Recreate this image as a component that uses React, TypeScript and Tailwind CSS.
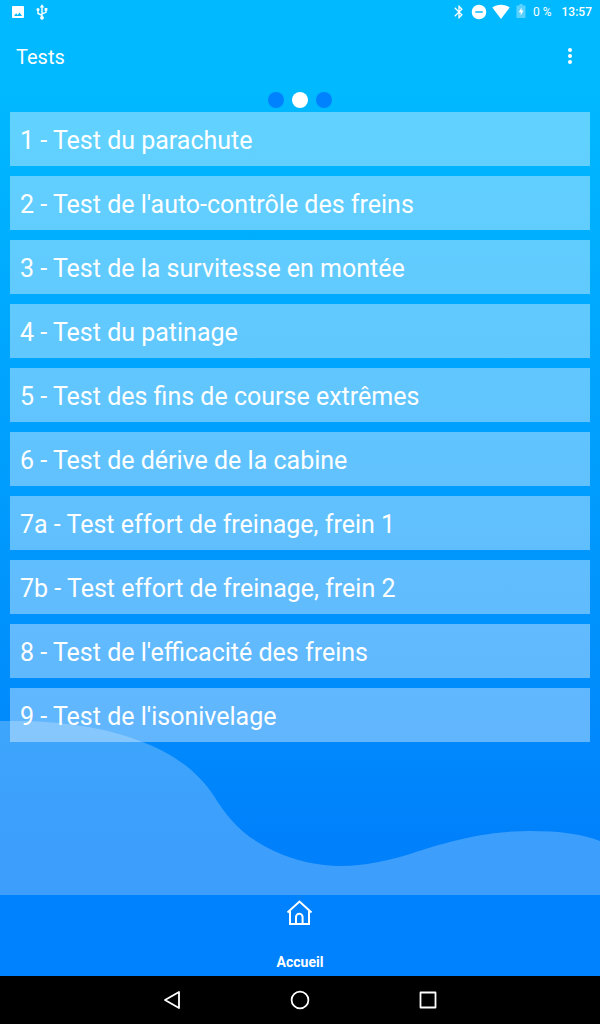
const tests = [
    { id: '1', label: 'Test du parachute' },
    { id: '2', label: "Test de l'auto-contrôle des freins" },
    { id: '3', label: 'Test de la survitesse en montée' },
    { id: '4', label: 'Test du patinage' },
    { id: '5', label: 'Test des fins de course extrêmes' },
    { id: '6', label: 'Test de dérive de la cabine' },
    { id: '7a', label: 'Test effort de freinage, frein 1' },
    { id: '7b', label: 'Test effort de freinage, frein 2' },
    { id: '8', label: "Test de l'efficacité des freins" },
    { id: '9', label: "Test de l'isonivelage" },
];

const pages = ['Page 1', 'Page 2', 'Page 3'];
const currentPage = 1;

function StatusBar() {
    return (
        <div className="flex h-6 items-center justify-between pl-3 pr-2 text-xs">
            <div className="flex items-center gap-2.5">
                <svg className="h-3 w-3" viewBox="0 0 12 12" fill="currentColor">
                    <path fillRule="evenodd" d="M1 0h10a1 1 0 0 1 1 1v10a1 1 0 0 1-1 1H1a1 1 0 0 1-1-1V1a1 1 0 0 1 1-1Zm1 10h8L7.6 6.4 5.6 9 4.1 7.2Z" />
                </svg>
                <svg className="h-4 w-4" viewBox="0 0 16 16" fill="none" stroke="currentColor" strokeWidth="1.4">
                    <path d="M8 13V3M8 11.3 4 9.5V6M8 9.8l4-1.5V5" />
                    <path d="M8 .3 10.3 3.6H5.7Z" fill="currentColor" stroke="none" />
                    <circle cx="4" cy="5.5" r="1.5" fill="currentColor" stroke="none" />
                    <path d="M10.6 4h2.8v2.8h-2.8Z" fill="currentColor" stroke="none" />
                    <circle cx="8" cy="13.8" r="1.9" fill="currentColor" stroke="none" />
                </svg>
            </div>
            <div className="flex items-center">
                <svg className="h-4 w-4" viewBox="0 0 24 24" fill="currentColor">
                    <path d="M17.71 7.71 12 2h-1v7.59L6.41 5 5 6.41 10.59 12 5 17.59 6.41 19 11 14.41V22h1l5.71-5.71-4.3-4.29 4.3-4.29ZM13 5.83l1.88 1.88L13 9.59V5.83Zm1.88 10.46L13 18.17v-3.76l1.88 1.88Z" />
                </svg>
                <svg className="ml-1 h-4 w-4" viewBox="0 0 16 16" fill="currentColor">
                    <path fillRule="evenodd" d="M8 .7a7.3 7.3 0 1 0 0 14.6A7.3 7.3 0 0 0 8 .7ZM4.3 7.2h7.4v1.6H4.3Z" />
                </svg>
                <svg className="ml-1 h-4 w-5" viewBox="0 0 20 16" fill="currentColor">
                    <path d="M10 15 1.3 3.6C3.8 1.8 6.8.8 10 .8s6.2 1 8.7 2.8Z" />
                </svg>
                <svg className="ml-1 h-4 w-3" viewBox="0 0 12 16" fill="currentColor">
                    <path opacity=".35" d="M4.5 0h3v1.5h3V14h-9V1.5h3Z" />
                    <path d="M6.6 3.5 3.7 8.3h2v3.2l2.9-5h-2Z" />
                </svg>
                <span className="ml-1.5">0 %</span>
                <span className="ml-2.5 font-medium">13:57</span>
            </div>
        </div>
    );
}

function Wave() {
    return (
        <svg
            className="absolute bottom-0 left-0 h-[174px] w-full"
            viewBox="0 0 600 174"
            preserveAspectRatio="none"
            fill="#ffffff"
            fillOpacity="0.24"
            aria-hidden="true"
        >
            <path d="M0 0C60-1 105 6 145 22C180 36 200 54 214 75C228 98 243 115 272 129C320 152 365 147 410 133C460 116 495 110 530 110C560 110 582 113 600 120V174H0Z" />
        </svg>
    );
}

export default function App() {
    return (
        <div className="flex min-h-screen flex-col bg-[#0082ff] font-[Roboto,sans-serif] text-white">
            <div className="relative flex flex-1 flex-col bg-linear-to-b from-[#00b9ff] from-10% to-[#0080fb] to-95%">
                <Wave />

                <div className="relative">
                    <StatusBar />

                    <header className="flex h-16 items-center justify-between pl-4 pr-5">
                        <h1 className="pt-0.5 text-xl">Tests</h1>
                        <button type="button" aria-label="Plus d'options" className="flex h-8 w-5 items-center justify-center">
                            <svg className="h-4 w-1" viewBox="0 0 4 16" fill="currentColor">
                                <circle cx="2" cy="2" r="2" />
                                <circle cx="2" cy="8" r="2" />
                                <circle cx="2" cy="14" r="2" />
                            </svg>
                        </button>
                    </header>

                    <nav aria-label="Pages" className="flex justify-center gap-2 py-1">
                        {pages.map((page, i) => (
                            <button
                                key={page}
                                type="button"
                                aria-label={page}
                                className={i === currentPage ? 'h-4 w-4 rounded-full bg-white' : 'h-4 w-4 rounded-full bg-[#0082ff]'}
                            />
                        ))}
                    </nav>

                    <ul className="flex flex-col gap-[10px] px-[10px]">
                        {tests.map(test => (
                            <li key={test.id}>
                                <button type="button" className="h-[54px] w-full bg-white/38 px-[10px] pt-1 text-left text-[25px] leading-[50px]">
                                    {test.id} - {test.label}
                                </button>
                            </li>
                        ))}
                    </ul>
                </div>
            </div>

            <footer className="flex h-[81px] justify-center">
                <a href="#" className="flex flex-col items-center justify-between pt-1 pb-1">
                    <svg className="h-7 w-7" viewBox="0 0 28 28" fill="none" stroke="currentColor" strokeWidth="2">
                        <path d="M1.5 13.5 13.5 2.5l12 11" />
                        <path d="M4 12v13h19V12" />
                        <path d="M10 25V18a3.3 3.3 0 0 1 6.6 0v7" />
                    </svg>
                    <span className="text-sm font-bold">Accueil</span>
                </a>
            </footer>

            <nav aria-label="Système" className="flex h-12 items-center justify-center gap-[104px] bg-black">
                <button type="button" aria-label="Retour">
                    <svg className="h-6 w-6" viewBox="0 0 24 24" fill="none" stroke="currentColor" strokeWidth="1.8" strokeLinejoin="round">
                        <path d="M19 4v16L5 12Z" />
                    </svg>
                </button>
                <button type="button" aria-label="Écran d'accueil">
                    <svg className="h-6 w-6" viewBox="0 0 24 24" fill="none" stroke="currentColor" strokeWidth="1.8">
                        <circle cx="12" cy="12" r="8.4" />
                    </svg>
                </button>
                <button type="button" aria-label="Applications récentes">
                    <svg className="h-6 w-6" viewBox="0 0 24 24" fill="none" stroke="currentColor" strokeWidth="1.8" strokeLinejoin="round">
                        <path d="M4.5 4.5h15v15h-15Z" />
                    </svg>
                </button>
            </nav>
        </div>
    );
}
